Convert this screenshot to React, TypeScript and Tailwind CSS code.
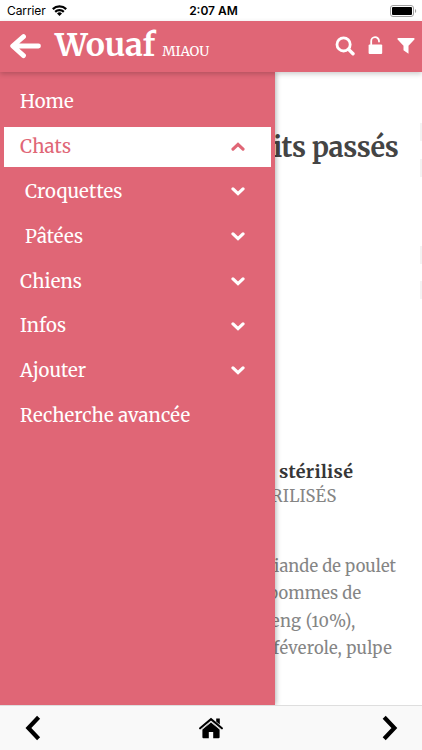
import React, { useState } from 'react';

interface MenuItem {
  label: string;
  expandable: boolean;
  nested?: boolean;
}

const menuItems: MenuItem[] = [
  { label: 'Home', expandable: false },
  { label: 'Chats', expandable: true },
  { label: 'Croquettes', expandable: true, nested: true },
  { label: 'Pâtées', expandable: true, nested: true },
  { label: 'Chiens', expandable: true },
  { label: 'Infos', expandable: true },
  { label: 'Ajouter', expandable: true },
  { label: 'Recherche avancée', expandable: false },
];

function StatusBar() {
  return (
    <div className="grid h-[21px] shrink-0 grid-cols-3 items-center bg-white pl-[7px] pr-[5px] font-['Inter',sans-serif] text-black">
      <div className="flex items-center gap-[6px]">
        <span className="text-[12px] leading-none tracking-[-0.1px]">Carrier</span>
        <svg className="h-[11px] w-[15px]" viewBox="0 0 15 11" fill="none" stroke="currentColor" strokeWidth="2.2">
          <path d="M0.8 4.1a9.5 9.5 0 0 1 13.4 0" />
          <path d="M3.2 6.9a6.1 6.1 0 0 1 8.6 0" />
          <path d="M7.5 11 5 8.6a3.5 3.5 0 0 1 5 0z" fill="currentColor" stroke="none" />
        </svg>
      </div>
      <span className="pl-[3px] text-center text-[12px] font-semibold leading-none">2:07 AM</span>
      <svg className="h-[12px] w-[27px] justify-self-end" viewBox="0 0 27 12">
        <rect x="0.5" y="0.5" width="23" height="11" rx="2.5" fill="none" stroke="#a0a0a0" />
        <rect x="2" y="2" width="20" height="8" rx="1" fill="#000" />
        <path d="M25 4v4c1.6-.6 1.6-3.4 0-4z" fill="#a0a0a0" />
      </svg>
    </div>
  );
}

function Header() {
  return (
    <header className="relative z-20 flex h-[50.5px] shrink-0 items-center bg-[#e06676] pl-[10px] pr-[7px] text-white shadow-[0_2px_5px_rgba(0,0,0,0.2)]">
      <svg className="h-[26px] w-[32px]" viewBox="0 0 32 26" fill="none" stroke="currentColor" strokeWidth="4.8" strokeLinecap="round" strokeLinejoin="round">
        <path d="M13.5 3.6 2.7 13l10.8 9.6M3.5 13h25" />
      </svg>
      <div className="flex flex-1 items-baseline gap-[7px] pl-[13px] pb-[2px]">
        <h1 className="text-[32px] font-bold leading-[44px] tracking-[-0.2px]">Wouaf</h1>
        <span className="text-[13.5px] leading-none tracking-[-0.1px]">MIAOU</span>
      </div>
      <div className="flex items-center">
        <svg className="h-[20px] w-[20px]" viewBox="0 0 20 20" fill="none" stroke="currentColor">
          <circle cx="8.6" cy="8.4" r="6.6" strokeWidth="2.8" />
          <path d="M13.6 13.4 18 17.8" strokeWidth="3.4" strokeLinecap="round" />
        </svg>
        <svg className="mb-[2px] ml-[13px] h-[19px] w-[15px]" viewBox="0 0 15 19">
          <path d="M3.2 9V5.2a3.9 3.9 0 0 1 7.8-.2v.6" fill="none" stroke="currentColor" strokeWidth="1.8" strokeLinecap="round" />
          <rect x="0.6" y="8.4" width="13.6" height="9.6" rx="1" fill="currentColor" />
        </svg>
        <svg className="ml-[14px] h-[18px] w-[18px]" viewBox="0 0 18 18" fill="currentColor">
          <path d="M1.3 1h15.4c.8 0 1.2.9.7 1.5L11.5 8.7v8.1l-5-3.5V8.7L.6 2.5C.1 1.9.5 1 1.3 1z" />
        </svg>
      </div>
    </header>
  );
}

function Drawer() {
  const [open, setOpen] = useState('Chats');

  return (
    <nav className="absolute inset-y-0 left-0 z-10 flex w-[275px] flex-col gap-[4px] bg-[#e06676] px-[4px] pt-[10.3px] shadow-[1px_0_5px_rgba(0,0,0,0.3)]">
      {menuItems.map((item) => {
        const active = item.label === open;
        return (
          <button
            key={item.label}
            onClick={() => setOpen(item.label)}
            className={`flex h-[40.8px] shrink-0 items-center justify-between pr-[26px] ${
              item.nested ? 'pl-[21px]' : 'pl-[16px]'
            } ${active ? 'bg-white text-[#e06676]' : 'text-white'}`}
          >
            <span className="pt-[1px] text-[18.5px] leading-none whitespace-nowrap tracking-[0.14px]">{item.label}</span>
            {item.expandable && (
              <svg className={`h-[9px] w-[14px] ${active ? 'rotate-180' : ''}`} viewBox="0 0 14 9" fill="none" stroke="currentColor" strokeWidth="3.2">
                <path d="M2 1.9 7 6.6l5-4.7" strokeLinecap="round" />
              </svg>
            )}
          </button>
        );
      })}
    </nav>
  );
}

function Content() {
  return (
    <section className="h-full overflow-hidden whitespace-nowrap bg-white text-[#858585]">
      <h2 className="pt-[55.5px] pl-[273px] text-[27px] font-bold leading-[40px] tracking-[-0.35px] text-[#444]">its passés</h2>
      <h3 className="mt-[293px] pl-[279px] text-[18px] font-bold leading-[24px] tracking-[0.32px] text-[#363636]">stérilisé</h3>
      <p className="pl-[271px] text-[16.5px] leading-[25px] tracking-[0.3px]">RILISÉS</p>
      <div className="mt-[43.5px] text-[16.5px] leading-[27.5px] oldstyle-nums">
        <p className="pl-[274px] tracking-[0.08px]">iande de poulet</p>
        <p className="pl-[268px] tracking-[0.1px]">pommes de</p>
        <p className="pl-[271px] tracking-[0.4px]">eng (10%),</p>
        <p className="pl-[273px] tracking-[0.25px]">féverole, pulpe</p>
      </div>
    </section>
  );
}

function EdgeMarks() {
  return (
    <div className="absolute right-0 top-[51px] w-[2px]">
      <div className="h-[18px] bg-[#f3f3f3]" />
      <div className="mt-[18px] h-[18px] bg-[#f3f3f3]" />
      <div className="mt-[69px] h-[18px] bg-[#f3f3f3]" />
      <div className="mt-[17px] h-[18px] bg-[#f3f3f3]" />
    </div>
  );
}

function Toolbar() {
  return (
    <footer className="relative z-20 flex h-[45px] shrink-0 items-center justify-between border-t border-[#dedede] bg-[#f9f9f9] pl-[23px] pr-[23px] text-black">
      <svg className="h-[26px] w-[18px]" viewBox="0 0 18 26" fill="none" stroke="currentColor" strokeWidth="4.2">
        <path d="M15.6 2.2 5.4 13l10.2 10.8" />
      </svg>
      <svg className="h-[22px] w-[26px]" viewBox="0 0 26 22" fill="currentColor">
        <path d="M13 5.4 4.4 12.5v7.8c0 .5.4.9.9.9h5.5v-6.1h4.4v6.1h5.5c.5 0 .9-.4.9-.9v-7.8z" />
        <path d="M18.2 1.5h3.6v6l-3.6-3z" />
        <path d="M2.1 11.3 13 2.2l10.9 9.1" fill="none" stroke="currentColor" strokeWidth="2.1" strokeLinecap="round" />
        <path d="M3.8 12.5 13 4.8l9.2 7.7" fill="none" stroke="#b4b4b4" strokeWidth="0.8" />
      </svg>
      <svg className="h-[26px] w-[18px]" viewBox="0 0 18 26" fill="none" stroke="currentColor" strokeWidth="4.2">
        <path d="m3.2 2.2 10.2 10.8L3.2 23.8" />
      </svg>
    </footer>
  );
}

function App() {
  return (
    <div className="flex h-[750px] w-[422px] flex-col overflow-hidden bg-white font-['Merriweather','DejaVu_Serif_Condensed','DejaVu_Serif',serif]">
      <StatusBar />
      <Header />
      <main className="relative min-h-0 flex-1">
        <Content />
        <EdgeMarks />
        <Drawer />
      </main>
      <Toolbar />
    </div>
  );
}

export default App;
